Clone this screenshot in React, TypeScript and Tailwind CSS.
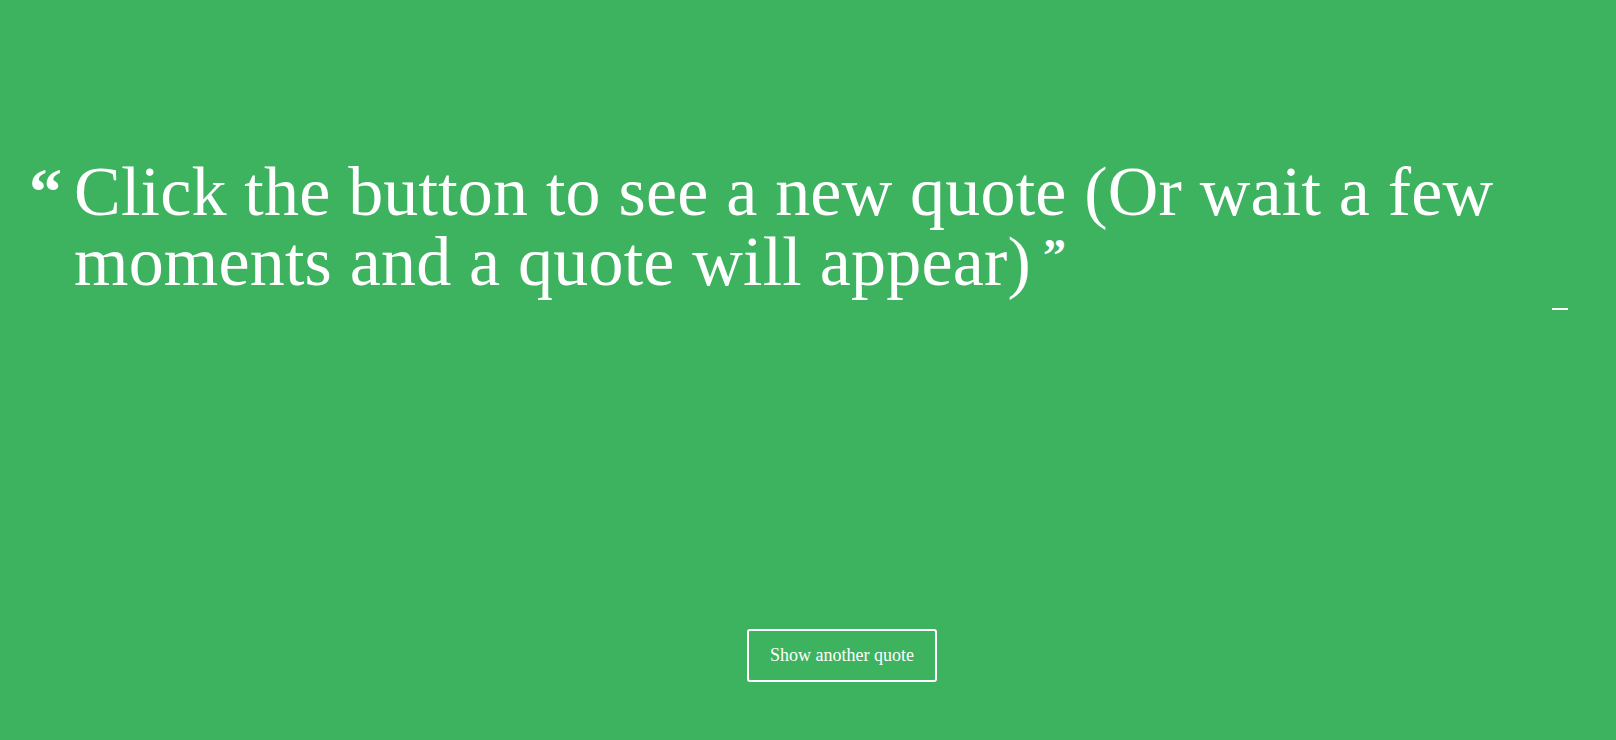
export default function App() {
  return (
    <div
      className="w-full h-[740px] bg-[#3db35f] text-white flex flex-col overflow-hidden"
      style={{ fontFamily: '"Liberation Serif", "Times New Roman", serif' }}
    >
      {/* Quote */}
      <div className="flex pt-[157px] pl-[29px]">
        <span className="w-[45px] shrink-0 text-[66px] font-bold leading-none mt-[2px]">“</span>
        <p className="w-[1470px] text-[70px] leading-[70px] font-normal tracking-[0.2px]">
          Click the button to see a new quote (Or wait a few moments and a quote will appear)
          <span className="inline-block text-[46px] font-bold align-top leading-[46px] ml-[12px] mt-[6px]">”</span>
        </p>
      </div>

      {/* Author */}
      <div className="flex justify-end pr-[48px] mt-[11px]">
        <span className="block w-[16px] h-[2px] bg-white" />
      </div>

      {/* Button */}
      <div className="mt-auto mb-[58px] flex justify-center pl-[68px]">
        <button className="w-[190px] h-[53px] border-2 border-white rounded-[3px] text-[18px] text-white">
          Show another quote
        </button>
      </div>
    </div>
  );
}
